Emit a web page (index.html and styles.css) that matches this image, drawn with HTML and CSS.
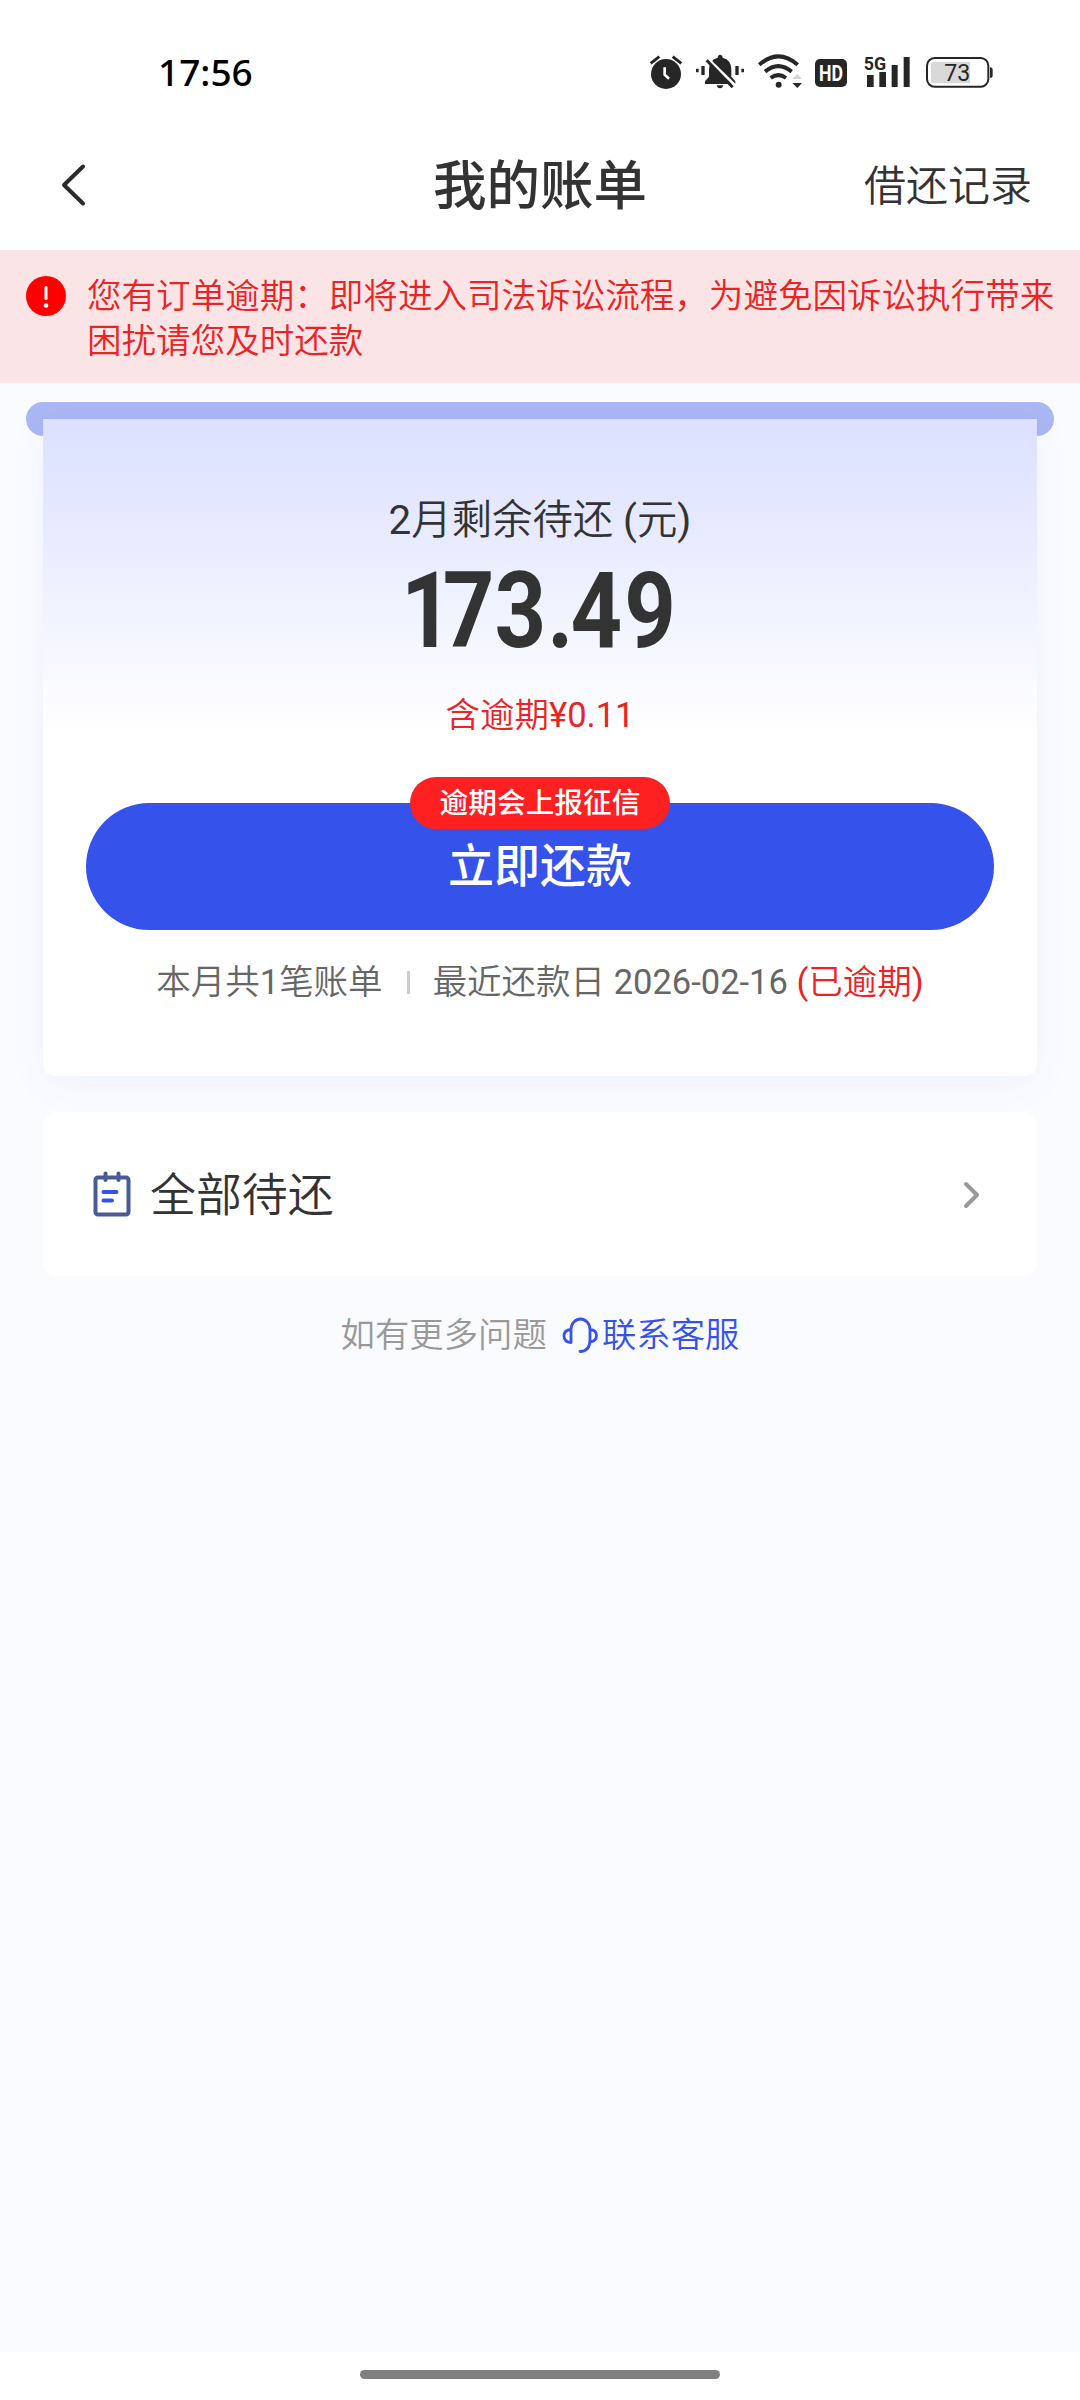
FILE: index.html
```html
<!DOCTYPE html>
<html lang="zh-CN">
<head>
<meta charset="utf-8">
<title>我的账单</title>
<link rel="stylesheet" href="styles.css">
</head>
<body>
<div class="screen">
  <div class="status">
    <span class="time">17:56</span>
    <svg class="status-icons" viewBox="0 0 1140 210">
      <g fill="#262626">
        <circle cx="108" cy="102" r="45"/>
        <path d="M62 70L88 50M128 50L154 70" stroke="#262626" stroke-width="9" fill="none"/>
        <path d="M104 82V104L117 116" stroke="#fff" stroke-width="8" fill="none"/>
        <path d="M270 44q7 0 8 9q26 7 26 35v22l12 14v8h-91v-8l12-14v-22q0-28 26-35q1-9 7-9z"/>
        <path d="M260 136h20q-2 9-10 9t-10-9z"/>
        <path d="M198 86h8v11h-8zM214 78h10v27h-10zM316 78h10v27h-10zM334 86h8v11h-8z"/>
        <path d="M228 51L317 138" stroke="#fff" stroke-width="9"/>
        <path d="M230 61L308 142" stroke="#262626" stroke-width="9"/>
        <g fill="none" stroke="#262626" stroke-width="12">
          <path d="M388 74Q445 24 503 74M405 95Q445 62 485 95M422 114Q445 97 468 114"/>
        </g>
        <circle cx="446" cy="134" r="9"/>
        <path d="M487 129h29l-14 15z"/>
        <path d="M487 117h29l-14-15z" fill="#d5d5d5"/>
        <rect x="555" y="57" width="96" height="84" rx="15"/>
        <path d="M711 105h20v36h-20zM748 96h20v45h-20zM785 75h18v66h-18zM821 51h18v90h-18z"/>
        <rect x="891" y="54" width="184" height="86" rx="23" fill="none" stroke="#262626" stroke-width="6"/>
        <path d="M913 65h107v65h-107q-10 0-10-10v-45q0-10 10-10z" fill="#d9d9d9"/>
        <path d="M1080 82q8 0 8 8v16q0 8-8 8z"/>
      </g>
      <text class="hd" x="603" y="122" textLength="72" lengthAdjust="spacingAndGlyphs">HD</text>
      <text class="five-g" x="735" y="89" textLength="67" lengthAdjust="spacingAndGlyphs">5G</text>
      <text class="charge" x="982" y="123" textLength="78" lengthAdjust="spacingAndGlyphs">73</text>
    </svg>
  </div>
  <div class="nav">
    <svg class="back" viewBox="0 0 28 48"><path d="M23 5.500L4 24L23 42.500"/></svg>
    <h1>我的账单</h1>
    <span class="records">借还记录</span>
  </div>
  <div class="alert">
    <svg class="warn" viewBox="0 0 40 40"><circle cx="20" cy="20" r="20" fill="#f00"/><path d="M20 11.500V22.500" stroke="#fff" stroke-width="3" stroke-linecap="round"/><circle cx="20" cy="29.500" r="2.300" fill="#fff"/></svg>
    <p>您有订单逾期：即将进入司法诉讼流程，为避免因诉讼执行带来困扰请您及时还款</p>
  </div>
  <main>
    <div class="slot"></div>
    <section class="bill">
      <div class="label"><span class="num">2</span>月剩余待还 <span class="num">(</span>元<span class="num">)</span></div>
      <svg class="amount" viewBox="0 0 300 100"><text transform="scale(.85 1)" y="87" x="13 62 123 185 212.500 275.500">173.49</text></svg>
      <div class="overdue">含逾期<span class="num">¥0.11</span></div>
      <div class="pay">立即还款<span class="badge">逾期会上报征信</span></div>
      <div class="info">
        <span>本月共<span class="num">1</span>笔账单</span><i></i><span>最近还款日<span class="num"> 2026-02-16 </span><b><span class="num">(</span>已逾期<span class="num">)</span></b></span>
      </div>
    </section>
    <section class="all">
      <svg class="note" viewBox="0 0 38 46">
        <g fill="none" stroke-linecap="round" stroke-width="4">
          <rect x="2.500" y="6.500" width="33" height="37" rx="2.500" stroke="#4a5a97"/>
          <path d="M12.500 2.500V9M25.500 2.500V9" stroke="#4a5a97"/>
          <path d="M10.500 21H23.500M10.500 29.500H19" stroke="#3552eb"/>
        </g>
      </svg>
      <span>全部待还</span>
      <svg class="arrow" viewBox="0 0 20 32"><path d="M5 5L16 16L5 27"/></svg>
    </section>
    <div class="help">
      <span>如有更多问题</span>
      <svg class="headset" viewBox="0 0 36 36">
        <path d="M9 25.500V12.500a9.500 10.500 0 0 1 19 0V22.500Q28 34.500 18 34.500M9 12.500Q2 13 2 19T9 25.500M28 12.500Q34.500 13 34.500 18.500T28 25"/>
      </svg>
      <span class="link">联系客服</span>
    </div>
  </main>
  <footer><div class="home"></div></footer>
</div>
</body>
</html>
```

FILE: styles.css
```css
* { box-sizing: border-box; }
body { margin: 0; background: #fff; font-family: Roboto, "Noto Sans CJK SC", sans-serif; font-weight: 350; color: #333; }
.screen { width: 1080px; height: 2400px; display: flex; flex-direction: column; overflow: hidden; }
svg { display: block; flex: none; }
.num { font-weight: 400; }

.status { height: 120px; display: flex; justify-content: space-between; padding: 40px 70px 0 158px; }
.time { font: 500 37px/64px "Noto Sans", sans-serif; color: #000; }
.status-icons { width: 380px; height: 70px; }
.status-icons text { text-anchor: middle; font-family: Roboto, sans-serif; }
.hd { font-size: 66px; font-weight: 700; fill: #fff; }
.five-g { font-size: 56px; font-weight: 700; fill: #262626; }
.charge { font-size: 70px; font-weight: 400; fill: #262626; }

.nav { height: 130px; display: grid; grid-template-columns: 1fr auto 1fr; align-items: center; padding: 0 48px 0 60px; }
.back { width: 28px; height: 48px; }
.back path { fill: none; stroke: #2b2b2b; stroke-width: 4; stroke-linecap: round; stroke-linejoin: round; }
.nav h1 { margin: 4px 12px 0 0; font-size: 53.5px; line-height: 60px; font-weight: 500; }
.records { justify-self: end; margin-top: 3px; font-size: 42px; line-height: 60px; }

.alert { height: 133px; background: #fbe4e6; display: flex; gap: 21px; padding: 23px 20px 0 26px; color: #ea2424; }
.warn { width: 40px; height: 40px; margin-top: 3px; }
.alert p { margin: 1px 0 0; width: 970px; font-size: 34.55px; line-height: 45px; }

main { flex: 1; background: #fafbff; padding: 19px 26px 0; }
.slot { height: 34px; border-radius: 17px; background: #abb6f4; }
.bill { position: relative; margin: -17px 17px 0; height: 657px; padding: 78px 43px 0; border-radius: 0 0 12px 12px;
  background: linear-gradient(#dbe0ff, #fff 315px); box-shadow: 0 8px 40px rgba(53, 82, 200, .05);
  display: flex; flex-direction: column; align-items: center; }
.label { font-size: 40.4px; line-height: 48px; }
.amount { width: 300px; height: 100px; margin-top: 15px; overflow: visible; }
.amount text { font: 700 106px Roboto, sans-serif; fill: #333; }
.overdue { font-size: 34.5px; line-height: 46px; margin-top: 32px; color: #ea2424; }
.pay { position: relative; align-self: stretch; height: 127px; margin-top: 65px; border-radius: 64px; background: #3552eb;
  color: #fff; font-size: 46px; font-weight: 500; line-height: 127px; text-align: center; }
.badge { position: absolute; top: -26px; left: 324px; width: 260px; height: 52px; border-radius: 26px; background: #ff2122;
  font-size: 28.7px; line-height: 52px; }
.info { display: flex; align-items: center; margin-top: 29px; font-size: 34.5px; line-height: 46px; color: #666; white-space: nowrap; }
.info i { width: 3px; height: 23px; margin: 0 23px 0 24px; background: #ccc; }
.info b { font-weight: 350; color: #ea2424; }

.all { position: relative; margin: 36px 17px 0; height: 164px; border-radius: 12px; background: #fff; display: flex; align-items: center;
  padding: 0 56px 0 50px; font-size: 45.9px; line-height: 60px; }
.all span { margin-top: 2px; }
.note { width: 38px; height: 46px; margin: -1px 19px 0 0; }
.arrow { width: 20px; height: 32px; margin: 2px 0 0 auto; }
.arrow path { fill: none; stroke: #999; stroke-width: 4; stroke-linecap: round; stroke-linejoin: round; }

.help { display: flex; justify-content: center; align-items: center; margin-top: 35px; font-size: 34.4px; line-height: 48px; color: #999; }
.headset { width: 36px; height: 36px; margin: 0 4px 0 15px; }
.headset path { fill: none; stroke: #3552eb; stroke-width: 2.8; stroke-linecap: round; }
.link { color: #3552eb; }

footer { height: 48px; background: #fff; padding-top: 18px; }
.home { width: 360px; height: 9px; margin: 0 auto; border-radius: 5px; background: #808080; }
```
